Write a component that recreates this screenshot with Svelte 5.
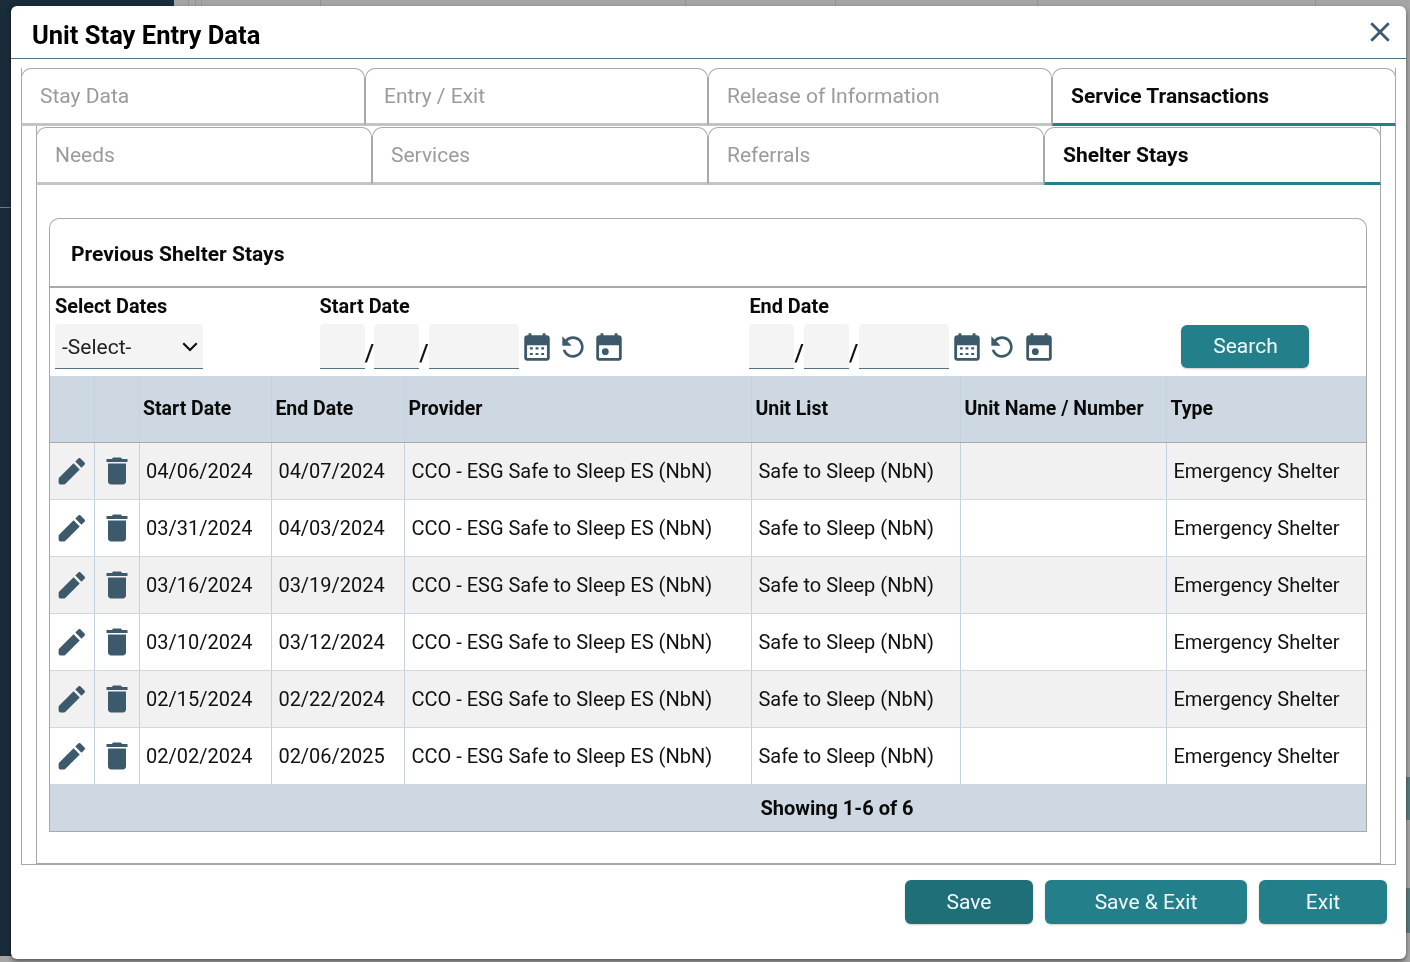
<script>
  const rows = [
    ['04/06/2024', '04/07/2024'],
    ['03/31/2024', '04/03/2024'],
    ['03/16/2024', '03/19/2024'],
    ['03/10/2024', '03/12/2024'],
    ['02/15/2024', '02/22/2024'],
    ['02/02/2024', '02/06/2025']
  ];
  const outer = ['Stay Data', 'Entry / Exit', 'Release of Information', 'Service Transactions'];
  const inner = ['Needs', 'Services', 'Referrals', 'Shelter Stays'];
  const cols = ['', '', 'Start Date', 'End Date', 'Provider', 'Unit List', 'Unit Name / Number', 'Type'];
</script>

{#snippet dateIcons()}
  <svg class="ic cal" viewBox="0 0 24 24"><path d="M19 3h-1V1.500h-2V3H8V1.500H6V3H5C3.900 3 3 3.900 3 5v14c0 1.100.9 2 2 2h14c1.100 0 2-.9 2-2V5c0-1.100-.9-2-2-2zm0 16H5v-9h14z"/><path d="M7 11.500h2V13H7zm4 0h2V13h-2zm4 0h2V13h-2zM7 15.500h2V17H7zm4 0h2V17h-2zm4 0h2V17h-2z"/></svg>
  <svg class="ic undo" viewBox="0 0 24 24"><path transform="matrix(-1 0 0 1 24 0)" d="M17.650 6.350C16.200 4.900 14.210 4 12 4c-4.420 0-7.990 3.580-7.990 8s3.570 8 7.990 8c3.730 0 6.840-2.550 7.730-6h-2.080c-.82 2.330-3.040 4-5.650 4-3.310 0-6-2.690-6-6s2.690-6 6-6c1.660 0 3.140.69 4.220 1.780L13 11h7V4l-2.350 2.350z"/></svg>
  <svg class="ic cal last" viewBox="0 0 24 24"><path d="M19 3h-1V1.500h-2V3H8V1.500H6V3H5C3.900 3 3 3.900 3 5v14c0 1.100.9 2 2 2h14c1.100 0 2-.9 2-2V5c0-1.100-.9-2-2-2zm0 16H5v-9h14z"/><circle cx="9.400" cy="14.600" r="2.400"/></svg>
{/snippet}

{#snippet dateField(label)}
  <div class="field date">
    <span class="lbl">{label}</span>
    <div class="date-row">
      <span class="seg s"></span><span class="slash">/</span>
      <span class="seg s"></span><span class="slash">/</span>
      <span class="seg l"></span>
      {@render dateIcons()}
    </div>
  </div>
{/snippet}

<div class="backdrop">
  <div class="side"></div>
  <div class="main"></div>
  {#each [188, 195, 201, 320, 685, 835, 1037, 1315] as x}
    <span class="bgline" style="left: {x}px"></span>
  {/each}
  <span class="sideline"></span>
  <span class="patch p1"></span>
  <span class="patch p2"></span>
</div>

<div class="modal">
  <header class="head">
    <h1>Unit Stay Entry Data</h1>
    <svg class="close" viewBox="0 0 24 24"><path d="M5 5l14 14M19 5L5 19"/></svg>
  </header>

  <div class="outer">
    <div class="tabs">
      {#each outer as t, i}
        <div class="tab" class:active={i === 3}>{t}</div>
      {/each}
    </div>
    <div class="inner">
      <div class="tabs sub">
        {#each inner as t, i}
          <div class="tab" class:active={i === 3}>{t}</div>
        {/each}
      </div>
      <div class="pane">
        <section class="card">
          <h2>Previous Shelter Stays</h2>
          <div class="filters">
            <div class="field sel">
              <span class="lbl">Select Dates</span>
              <div class="select">-Select-
                <svg viewBox="0 0 16 16"><path d="M2 5.500l6 6 6-6"/></svg>
              </div>
            </div>
            {@render dateField('Start Date')}
            {@render dateField('End Date')}
            <button class="btn search">Search</button>
          </div>
          <div class="table">
            <div class="tr th">
              {#each cols as c}<div class="c">{c}</div>{/each}
            </div>
            {#each rows as r, i}
              <div class="tr" class:odd={i % 2 === 0}>
                <div class="c ico">
                  <svg class="ic pencil" viewBox="0 0 24 24"><path d="M3 17.400V20c0 .55.45 1 1 1h2.600c.27 0 .52-.1.7-.29L16.700 11.300l-4-4-9.410 9.400c-.19.19-.29.44-.29.7zM19.800 8.200l-2 2-4-4 2-2c.39-.39 1.020-.39 1.410 0l2.590 2.590c.39.39.39 1.020 0 1.410z"/></svg>
                </div>
                <div class="c ico">
                  <svg class="ic trash" viewBox="0 0 24 24"><path d="M19 4h-3.500l-1-1h-5l-1 1H5v2h14zM6 19c0 1.100.9 2 2 2h8c1.100 0 2-.9 2-2V7H6z"/></svg>
                </div>
                <div class="c">{r[0]}</div>
                <div class="c">{r[1]}</div>
                <div class="c">CCO - ESG Safe to Sleep ES (NbN)</div>
                <div class="c">Safe to Sleep (NbN)</div>
                <div class="c"></div>
                <div class="c">Emergency Shelter</div>
              </div>
            {/each}
            <div class="foot">Showing 1-6 of 6</div>
          </div>
        </section>
      </div>
    </div>
  </div>

  <footer class="actions">
    <button class="btn save">Save</button>
    <button class="btn se">Save &amp; Exit</button>
    <button class="btn ex">Exit</button>
  </footer>
</div>

<style>
  :global(body) {
    margin: 0;
    background: #a5a5a5;
    font-family: Roboto, "Liberation Sans", sans-serif;
    overflow: hidden;
  }
  .backdrop {
    display: flex;
    height: 962px;
    position: relative;
  }
  .side { width: 174px; height: 956px; background: #1a2b3a; }
  .main { flex: 1; background: #a5a5a5; }
  .bgline { position: absolute; top: 0; width: 1px; height: 6px; background: #8e949a; }
  .sideline { position: absolute; left: 0; top: 207px; width: 11px; height: 1px; background: #6f7a84; }
  .patch { position: absolute; left: 1406px; width: 4px; background: #5d7a7c; }
  .p1 { top: 777px; height: 43px; }
  .p2 { top: 888px; height: 45px; }

  .modal {
    position: fixed;
    left: 11px;
    top: 6px;
    width: 1395px;
    height: 953px;
    box-sizing: border-box;
    background: #fff;
    border-radius: 6px;
    box-shadow: 0 2px 4px rgba(0, 0, 0, .5);
    display: flex;
    flex-direction: column;
  }
  .head {
    height: 52px;
    flex: none;
    border-bottom: 1px solid #54707f;
    display: flex;
    align-items: flex-start;
    justify-content: space-between;
    padding: 0 11px 0 21px;
  }
  h1 {
    margin: 14px 0 0;
    font-size: 25.500px;
    line-height: 30px;
    font-weight: 700;
    color: #000;
  }
  .close { width: 30px; height: 30px; margin-top: 11px; fill: none; stroke: #3d5a6c; stroke-width: 2.200; }

  .outer {
    margin: 9px 10px 0;
    height: 797px;
    flex: none;
    box-sizing: border-box;
    border: solid #a8a8a8;
    border-width: 0 1px 1px;
    display: flex;
    flex-direction: column;
  }
  .tabs { display: grid; grid-template-columns: 344px 343px 344px 1fr; flex: none; margin: 0 -1px; }
  .tabs.sub { grid-template-columns: 336px 336px 336px 1fr; padding-top: 1px; }
  .tab {
    height: 58px;
    box-sizing: border-box;
    border: 1px solid #a8a8a8;
    border-bottom: 3px solid #c4c4c4;
    border-radius: 10px 10px 0 0;
    padding: 0 18px;
    font-size: 21px;
    line-height: 54px;
    color: #9b9b9b;
    background: #fff;
  }
  .tab.active {
    color: #0a0a0a;
    font-weight: 700;
    border-bottom-color: #23808a;
  }
  .inner {
    margin: 0 14px;
    flex: 1;
    min-height: 0;
    display: flex;
    flex-direction: column;
    border: solid #a8a8a8;
    border-width: 0 1px 1px;
  }
  .pane {
    flex: 1;
    padding: 33px 13px 0 12px;
    min-height: 0;
  }
  .card {
    border: 1px solid #a8a8a8;
    border-radius: 10px 10px 0 0;
    border-bottom: 0;
  }
  h2 {
    margin: 0;
    height: 69px;
    box-sizing: border-box;
    border-bottom: 2px solid #a8a8a8;
    padding: 0 21px;
    font-size: 21px;
    font-weight: 700;
    line-height: 70px;
    color: #0a0a0a;
  }
  .filters {
    height: 88px;
    box-sizing: border-box;
    padding: 7px 0 0 5px;
    display: flex;
    align-items: flex-start;
  }
  .field { display: flex; flex-direction: column; }
  .lbl { font-size: 19.900px; font-weight: 700; line-height: 24px; color: #0a0a0a; margin-bottom: 5px; }
  .sel { width: 264.600px; }
  .date { width: 429.800px; }
  .select {
    width: 148px;
    height: 45px;
    box-sizing: border-box;
    background: #f4f4f4;
    border-bottom: 1px solid #54707f;
    border-radius: 4px 4px 0 0;
    padding: 2px 4px 0 7px;
    font-size: 21px;
    line-height: 43px;
    color: #222;
    display: flex;
    justify-content: space-between;
    align-items: center;
  }
  .select svg { width: 18px; height: 18px; fill: none; stroke: #111; stroke-width: 1.900; margin-top: -2px; }
  .date-row { display: flex; align-items: flex-start; height: 45px; }
  .seg {
    height: 45px;
    flex: none;
    box-sizing: border-box;
    background: #f4f4f4;
    border-bottom: 1px solid #54707f;
    border-radius: 4px 4px 0 0;
  }
  .seg.s { width: 45px; }
  .seg.l { width: 90px; }
  .slash {
    width: 9.600px;
    flex: none;
    font-size: 24px;
    font-weight: 500;
    line-height: 58px;
    height: 45px;
    color: #111;
    text-align: center;
  }
  .ic { fill: #3d5a6c; flex: none; }
  .ic.cal { width: 34px; height: 34px; margin: 7px 0 0 1.500px; }
  .ic.undo { width: 32px; height: 32px; margin: 7px 0 0 2.250px; }
  .ic.cal.last { margin-left: 3.750px; }
  .ic.pencil { width: 37px; height: 37px; margin-bottom: 2px; }
  .ic.trash { width: 36px; height: 36px; }

  .btn {
    border: 0;
    border-radius: 6px;
    background: #23808a;
    color: #f2fbfb;
    font-family: inherit;
    font-size: 21px;
    padding: 0;
    box-shadow: 0 1px 2px rgba(0, 0, 0, .2);
  }
  .search { width: 128px; height: 43px; margin: 30px 0 0 2.300px; padding-bottom: 2px; }

  .tr {
    display: grid;
    grid-template-columns: 45px 45px 132.400px 133px 347px 209px 206px 1fr;
    height: 57px;
    background: #fff;
    border-bottom: 1px solid #cdd8e2;
    box-sizing: border-box;
  }
  .tr.odd { background: #f1f1f1; }
  .tr.th {
    height: 67px;
    background: #cdd8e2;
    border-bottom: 1px solid #a8a8a8;
  }
  .c {
    border-right: 1px solid #c2d2df;
    box-sizing: border-box;
    padding-left: 6px;
    font-size: 20px;
    line-height: 56px;
    color: #111;
    white-space: nowrap;
  }
  .c:last-child { border-right: 0; }
  .th .c {
    padding-left: 3px;
    font-weight: 700;
    font-size: 19.500px;
    line-height: 65px;
    color: #0a0a0a;
  }
  .ico { padding: 0; display: flex; align-items: center; justify-content: center; }
  .foot {
    height: 47px;
    margin: 0 -1px;
    box-sizing: border-box;
    background: #cdd8e2;
    border: 1px solid #a8a8a8;
    border-top: 0;
    text-align: center;
    padding-left: 258px;
    font-size: 20px;
    font-weight: 700;
    line-height: 46px;
    color: #0a0a0a;
  }

  .actions {
    display: flex;
    justify-content: flex-end;
    gap: 12px;
    padding: 15px 19px 0 0;
  }
  .actions .btn { height: 44px; }
  .save { width: 128px; background: #1f6f79; }
  .se { width: 202px; }
  .ex { width: 128px; }
</style>
